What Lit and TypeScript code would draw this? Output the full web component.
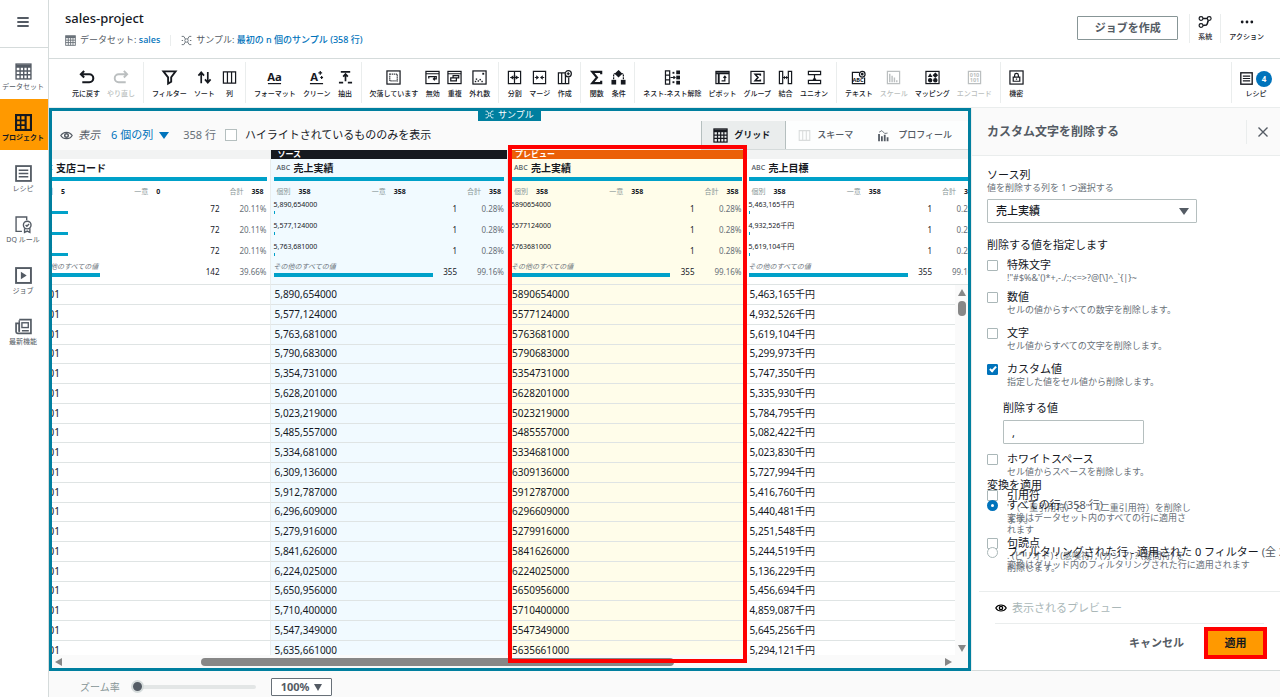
import { LitElement, html, css, svg, nothing, TemplateResult } from "lit";
import { customElement, property, state } from "lit/decorators.js";
import { classMap } from "lit/directives/class-map.js";
import { styleMap } from "lit/directives/style-map.js";

const dot = (x: number, y: number, s = 3) =>
  svg`<rect x=${x} y=${y} width=${s} height=${s} fill="currentColor" stroke="none"/>`;

/* Glyphs are drawn on a 16 x 16 grid and take the text colour. */
const ICONS: Record<string, TemplateResult> = {
  menu: svg`<path d="M1.500 3.500h13M1.500 8h13M1.500 12.500h13" stroke-width="2.200"/>`,
  table: svg`<rect x="1" y="1" width="14" height="14"/><path d="M1 3h14" stroke-width="3"/><path d="M1 7.500h14M1 11h14M4.800 3v12M8.200 3v12M11.600 3v12"/>`,
  project: svg`<rect x="1" y="1" width="14" height="14" stroke-width="2"/><path d="M1 6h9M1 10.500h9M5.300 1v14" stroke-width="1.500"/><path d="M10 1v14" stroke-width="2"/>`,
  list: svg`<rect x="1" y="1" width="14" height="14" stroke-width="1.700"/><path d="M3.500 5h9M3.500 8h9M3.500 11h9" stroke-width="1.500"/>`,
  dq: svg`<path d="M6.500 14.500H1V1h10v3"/><circle cx="11.500" cy="8.500" r="3.600"/><path d="M10 8.500l1.200 1.200 2-2.200M9 11.500v4l2.500-1.300L14 15.500v-4"/>`,
  play: svg`<rect x="1" y="1" width="14" height="14" stroke-width="1.800"/><path d="M5.500 4.500v7l5.500-3.500z" fill="currentColor" stroke="none"/>`,
  news: svg`<path d="M4 1.500h11v13H2.500a1.500 1.500 0 0 1-1.500-1.500V5h3v8" stroke-width="1.600"/><path d="M4 2v11M6.500 12h6.500"/><rect x="6.500" y="4.500" width="6" height="4.500"/>`,
  undo: svg`<path d="M5.500 1L2 4.500 5.500 8M2 4.500H11a4 4 0 0 1 0 8.500H3.500" stroke-width="2.200"/>`,
  redo: svg`<path d="M10.500 1L14 4.500 10.500 8M14 4.500H5a4 4 0 0 0 0 8.500h7.500" stroke-width="2"/>`,
  filter: svg`<path d="M1.500 1.500h13l-4.700 6.300v4.700L6.500 14.500V7.800z" stroke-width="2"/>`,
  sort: svg`<path d="M4.500 14V3.500M1.500 6l3-3.500 3 3.500M11.500 2v10.500M8.500 10l3 3.500 3-3.500" stroke-width="1.800"/>`,
  columns: svg`<path d="M1.500 2h13v12h-13zM5.800 2v12M10.200 2v12"/>`,
  format: svg`<text x="8" y="11.500" text-anchor="middle" class="aa">Aa</text><path d="M1 14.500h14"/>`,
  clean: svg`<text x="5.500" y="11.500" text-anchor="middle" class="aa">A</text><path d="M1 14.500h14M12 1v4M10 3h4M13.500 6.500v3M12 8h3"/>`,
  extract: svg`<path d="M3 2h10M8 12V4.500M5.500 7L8 4.300 10.500 7M1 13.500h4.500M10.500 13.500H15" stroke-width="1.800"/>`,
  missing: svg`<rect x="1" y="1" width="14" height="14"/><rect x="4" y="4.500" width="8" height="7" stroke-dasharray="1.200 .9"/>`,
  invalid: svg`<rect x="1" y="1.500" width="14" height="13"/><path d="M1 4h14M4 9V7h8v2.500H9.500M10.500 8l-1.500 1.500L10.500 11"/>`,
  duplicate: svg`<rect x="1" y="1.500" width="14" height="13"/><path d="M1 4h14M6.500 6h6v2.500h-6zM4 8.500h6v3H4z"/>`,
  outlier: svg`<rect x="1" y="1" width="14" height="14"/>${dot(11, 3, 2)}${dot(4, 9, 1.5)}${dot(6, 11, 1.5)}${dot(8, 9.5, 1.5)}${dot(10, 11.5, 1.5)}${dot(3, 11.5, 1.5)}`,
  split: svg`<path d="M1.500 1.500h13v13h-13zM8 1.500v13M3.500 8h9"/><path d="M6.800 5.500v5L3.500 8zM9.200 5.500v5L12.500 8z" fill="currentColor" stroke="none"/>`,
  merge: svg`<path d="M1.500 1.500h13v13h-13z"/><path d="M3 8h2M11 8h2"/><path d="M4.500 5.500v5L7.500 8zM11.500 5.500v5L8.500 8z" fill="currentColor" stroke="none"/>`,
  create: svg`<path d="M9 3H1.500v11.500h11V8M5 3v11.500M9 5v9.500"/><circle cx="12" cy="4" r="3.300"/><path d="M12 2.300v3.400M10.300 4h3.400"/>`,
  sigma: svg`<path d="M13 4.500V2H3.500l5 6-5 6H13v-2.500" stroke-width="2.300"/>`,
  cond: svg`<path d="M8 .8L11.200 4 8 7.200 4.800 4z" fill="currentColor"/><path d="M5 4H2.800v6M11 4h2.200v6" stroke-dasharray="2 1"/>${dot(.5, 10.500, 5)}${dot(10.500, 10.500, 5)}`,
  nest: svg`<path d="M.5 1h4.500v14H.5zM.5 5.500h4.500M.5 10.500h4.500M6 8h5M9 6.500L10.700 8 9 9.500"/>${dot(12, .5, 4)}${dot(12, 6, 4)}${dot(12, 11.500, 4)}${dot(8, 2, 2)}${dot(8, 12, 2)}`,
  pivot: svg`<rect x="1" y="1.500" width="14" height="13" stroke-width="1.300"/><path d="M1 3.500h14M4 3v11" stroke-width="2"/><path d="M7 11.500h3.500V7M9 8.300L10.500 6.500 12 8.300"/>`,
  group: svg`<rect x="1" y="1.500" width="14" height="13"/><path d="M11 6V4.500H5.500L8.500 8l-3 3.500H11V10" stroke-width="1.700"/>`,
  join: svg`<path d="M1.500 1.500h3.500v13H1.500zM11 1.500h3.500v13H11zM5 8h6"/><path d="M7.500 6v4L5.500 8zM8.500 6v4l2-2z" fill="currentColor" stroke="none"/>`,
  union: svg`<path d="M1.500 1.500h13V5h-13zM1.500 11h13v3.500h-13zM8 5v6M6.500 9.300L8 10.800l1.500-1.500"/>`,
  textic: svg`<path d="M9 2.500H1.500v12h13V8"/><circle cx="12" cy="4.500" r="3"/><circle cx="12" cy="4.500" r=".8"/><text x="7.500" y="12.500" text-anchor="middle" class="abc">ABC</text>`,
  scale: svg`<path d="M1.500 1.500h13v13h-13z"/><path d="M4 4v9M6.500 6v7M9 8v5M11.500 11v2" stroke-width="1.500"/>`,
  mapping: svg`<rect x="1" y="1.500" width="14" height="13"/><path d="M5.500 3.500L8 7.500H3z" fill="currentColor" stroke="none"/><circle cx="5.500" cy="11" r="1.700" fill="currentColor"/><circle cx="11" cy="11" r="1.700" fill="currentColor"/><path d="M11 3.500l2 2-2 2-2-2z" fill="currentColor"/>`,
  encode: svg`<path d="M1.500 1.500h13v13h-13z"/><text x="8" y="7.500" text-anchor="middle" class="abc">010</text><text x="8" y="13" text-anchor="middle" class="abc">101</text>`,
  lock: svg`<rect x="1" y="1" width="14" height="14"/><path d="M4.500 7.500h7v4.500h-7zM6 7.500V5.500a2 2 0 0 1 4 0v2M8 9v1.500"/>`,
  lineage: svg`<circle cx="3.500" cy="4" r="2.200"/><circle cx="12.800" cy="4" r="2.200"/><circle cx="3.500" cy="12" r="2.200"/><path d="M5.500 4h5M12 6.200c-1.500 1.500-.5 4-2.500 5.300L5.700 12" stroke-width="1.800"/>`,
  more: svg`<circle cx="2.500" cy="8" r="1.600" fill="currentColor" stroke="none"/><circle cx="8" cy="8" r="1.600" fill="currentColor" stroke="none"/><circle cx="13.500" cy="8" r="1.600" fill="currentColor" stroke="none"/>`,
  sample: svg`<circle cx="8" cy="8" r="2.500"/><path d="M1 2h3l2.500 4M15 2h-3L9.500 6M1 14h3l2.500-4M15 14h-3l-2.500-4M1 8h2M13 8h2" stroke-width="1.400"/>`,
  eye: svg`<path d="M1 8c3-5.300 11-5.300 14 0-3 5.300-11 5.300-14 0z" stroke-width="1.500"/><circle cx="8" cy="8" r="2.200" stroke-width="1.800"/>`,
  close: svg`<path d="M2 2l12 12M14 2L2 14" stroke-width="1.800"/>`,
  profile: svg`<path d="M2.500 6v9M6 9v6M9.500 7v8M13 10v5" stroke-width="2.200"/><path d="M2.500 4L6 2l3.500 3.500L13 5" stroke-width="1"/>`,
};

@customElement("ui-icon")
class UiIcon extends LitElement {
  @property() name = "";
  static styles = css`
    :host { display: block; width: 15px; height: 15px; flex: none; }
    svg { display: block; width: 100%; height: 100%; fill: none; stroke: currentColor; stroke-width: 1.3; overflow: visible; }
    text { fill: currentColor; stroke: none; font-family: "Noto Sans", sans-serif; font-weight: 700; }
    .aa { font-size: 12px; }
    .abc { font-size: 6px; }
  `;
  render() {
    return html`<svg viewBox="0 0 16 16" aria-hidden="true">${ICONS[this.name] ?? nothing}</svg>`;
  }
}

type Tool = { icon: string; label: string; off?: boolean };
const t = (icon: string, label: string, off = false): Tool => ({ icon, label, off });
const TOOLS: Tool[][] = [
  [t("undo", "元に戻す"), t("redo", "やり直し", true)],
  [t("filter", "フィルター"), t("sort", "ソート"), t("columns", "列")],
  [t("format", "フォーマット"), t("clean", "クリーン"), t("extract", "抽出")],
  [t("missing", "欠落しています"), t("invalid", "無効"), t("duplicate", "重複"), t("outlier", "外れ数")],
  [t("split", "分割"), t("merge", "マージ"), t("create", "作成")],
  [t("sigma", "関数"), t("cond", "条件")],
  [t("nest", "ネスト-ネスト解除"), t("pivot", "ピボット"), t("group", "グループ"), t("join", "結合"), t("union", "ユニオン")],
  [t("textic", "テキスト"), t("scale", "スケール", true), t("mapping", "マッピング"), t("encode", "エンコード", true)],
  [t("lock", "機密")],
];

const NAV = [
  ["table", "データセット"],
  ["project", "プロジェクト"],
  ["list", "レシピ"],
  ["dq", "DQ ルール"],
  ["play", "ジョブ"],
  ["news", "最新機能"],
];

type Column = { kind: string; band: string; name: string; distinct: string; unique: string; rows: [string, string, number][] };
const OTHER = "その他のすべての値";
const single = (a: string, b: string, c: string): [string, string, number][] => [
  [a, "1", 0.28], [b, "1", 0.28], [c, "1", 0.28], [OTHER, "355", 99.16],
];
const COLUMNS: Column[] = [
  { kind: "plain", band: "", name: "支店コード", distinct: "5", unique: "0", rows: [["0001", "72", 20.11], ["0002", "72", 20.11], ["0003", "72", 20.11], [OTHER, "142", 39.66]] },
  { kind: "source", band: "ソース", name: "売上実績", distinct: "358", unique: "358", rows: single("5,890,654000", "5,577,124000", "5,763,681000") },
  { kind: "preview", band: "プレビュー", name: "売上実績", distinct: "358", unique: "358", rows: single("5890654000", "5577124000", "5763681000") },
  { kind: "plain", band: "", name: "売上目標", distinct: "358", unique: "358", rows: single("5,463,165千円", "4,932,526千円", "5,619,104千円") },
];

const DATA: [string, string][] = [
  ["5,890,654000", "5,463,165"], ["5,577,124000", "4,932,526"], ["5,763,681000", "5,619,104"],
  ["5,790,683000", "5,299,973"], ["5,354,731000", "5,747,350"], ["5,628,201000", "5,335,930"],
  ["5,023,219000", "5,784,795"], ["5,485,557000", "5,082,422"], ["5,334,681000", "5,023,830"],
  ["6,309,136000", "5,727,994"], ["5,912,787000", "5,416,760"], ["6,296,609000", "5,440,481"],
  ["5,279,916000", "5,251,548"], ["5,841,626000", "5,244,519"], ["6,224,025000", "5,136,229"],
  ["5,650,956000", "5,456,694"], ["5,710,400000", "4,859,087"], ["5,547,349000", "5,645,256"],
  ["5,635,661000", "5,294,121"],
];

@customElement("data-grid")
class DataGrid extends LitElement {
  static styles = css`
    :host { display: flex; flex-direction: column; flex: 1; min-height: 0; position: relative; }
    .view { flex: 1; min-height: 0; overflow: hidden; position: relative; background: #fff; }
    table { width: 950px; margin-left: -20px; border-collapse: separate; border-spacing: 0; table-layout: fixed; }
    th, td { padding: 0; text-align: left; font-weight: 400; box-sizing: border-box; border-left: 1px solid #e9eded; border-bottom: 1px solid #dfe4e4; }
    .source { background: #f1faff; }
    .preview { background: #fffdea; }
    .band { height: 9px; line-height: 7px; font-size: 8px; font-weight: 700; color: #fff; background: #f2f3f3; padding-left: 7px; overflow: hidden; }
    .source .band { background: #16191f; }
    .preview .band { background: #eb5f07; }
    .name { display: flex; align-items: center; gap: 5px; height: 18px; padding-left: 6px; font-size: 10px; font-weight: 700; line-height: 16px; padding-bottom: 1px; box-sizing: border-box; color: #16191f; }
    .type { flex: none; width: 12px; font: 500 7px "Liberation Sans Narrow", "Noto Sans", sans-serif; color: #545b64; }
    .quality { height: 4px; margin: 0 3px; background: #00a1c9; }
    .stats { display: flex; justify-content: space-between; height: 18px; padding: 0 6px; box-sizing: border-box; line-height: 21px; font-size: 7px; color: #879596; }
    .stats b { color: #16191f; margin-left: 8px; }
    .row { display: grid; grid-template-columns: minmax(0, 1fr) 23px 47px; height: 21px; padding: 0 3px; }
    .label { height: 12px; line-height: 12px; font-size: 7px; color: #16191f; }
    .bar { height: 3px; background: #00a1c9; }
    .row.last { height: 20px; }
    .row.last .label { font-style: italic; color: #687078; height: 11px; line-height: 10px; }
    .row.last .bar { height: 4px; }
    .num { text-align: right; line-height: 20px; font-size: 8px; color: #16191f; }
    .pct { color: #687078; }
    .profile { padding-bottom: 2px; }
    tbody tr { height: 20px; }
    tbody tr:nth-child(4n) { height: 19px; }
    td { padding: 0 0 2px 4px; line-height: 16px; font-size: 10px; color: #16191f; white-space: nowrap; }
    .vscroll { position: absolute; right: 0; top: 135px; bottom: 0; width: 13px; background: #fafafa; display: flex; flex-direction: column; align-items: center; }
    .hscroll { display: flex; align-items: center; height: 13px; padding: 0 16px 0 3px; background: #fafafa; }
    .arrow { flex: none; width: 0; height: 0; border: 4px solid transparent; }
    .up { border-bottom: 7px solid #878787; border-top: 0; margin-top: 4px; }
    .down { border-top: 7px solid #878787; border-bottom: 0; margin: auto 0 3px; }
    .left { border-right: 7px solid #878787; border-left: 0; }
    .right { border-left: 7px solid #878787; border-right: 0; }
    .vthumb { width: 8px; height: 15px; margin-top: 5px; border-radius: 4px; background: #878787; }
    .track { flex: 1; padding: 0 30% 0 15%; }
    .hthumb { height: 8px; margin: 0 2px 0 4px; border-radius: 4px; background: #878787; }
    .mark { position: absolute; left: 456px; width: 239px; top: -5px; bottom: 5px; border: 4px solid #f00; box-sizing: border-box; pointer-events: none; }
  `;
  head(c: Column) {
    return html`<th class=${c.kind} scope="col">
      <div class="band">${c.band}</div>
      <div class="name"><span class="type">ABC</span>${c.name}</div>
      <div class="quality"></div>
      <div class="stats"><span>個別<b>${c.distinct}</b></span><span>一意<b>${c.unique}</b></span><span>合計<b>358</b></span></div>
      <div class="profile">${c.rows.map(([label, n, p], i) => html`<div class=${classMap({ row: true, last: i === 3 })}>
        <div><div class="label">${label}</div><div class="bar" style=${styleMap({ width: p + "%" })}></div></div>
        <div class="num">${n}</div><div class="num pct">${p}%</div></div>`)}</div>
    </th>`;
  }
  render() {
    return html`
      <div class="view">
        <table>
          <thead><tr>${COLUMNS.map((c) => this.head(c))}</tr></thead>
          <tbody>${DATA.map(([a, b]) => html`<tr>
            <td>0001</td><td class="source">${a}</td><td class="preview">${a.replace(/,/g, "")}</td><td>${b}千円</td></tr>`)}</tbody>
        </table>
        <div class="vscroll"><i class="arrow up"></i><i class="vthumb"></i><i class="arrow down"></i></div>
      </div>
      <div class="hscroll"><i class="arrow left"></i><div class="track"><div class="hthumb"></div></div><i class="arrow right"></i></div>
      <div class="mark"></div>`;
  }
}

type Option = { id: string; label: string; desc: string; tight?: boolean };
const OPTIONS: Option[] = [
  { id: "special", label: "特殊文字", desc: "!\"#$%&'()*+,-./:;<=>?@[\\]^_`{|}~", tight: true },
  { id: "number", label: "数値", desc: "セルの値からすべての数字を削除します。" },
  { id: "letter", label: "文字", desc: "セル値からすべての文字を削除します。" },
  { id: "custom", label: "カスタム値", desc: "指定した値をセル値から削除します。" },
  { id: "space", label: "ホワイトスペース", desc: "セル値からスペースを削除します。" },
  { id: "quote", label: "引用符", desc: "' （一重引用符）と \" （二重引用符）を削除します。" },
  { id: "punct", label: "句読点", desc: ". (ピリオド) ! (感嘆符) , (カンマ) ? (疑問符) を削除します。" },
];

@customElement("recipe-panel")
class RecipePanel extends LitElement {
  @state() checked: Record<string, boolean> = { custom: true };
  static styles = css`
    :host { display: flex; flex-direction: column; flex: none; width: 309px; box-sizing: border-box; background: #fff; border-bottom: 1px solid #d5dbdb; border-left: 1px solid #eaeded; font-size: 11px; line-height: 14px; color: #16191f; overflow: hidden; }
    button, input, select { font: inherit; color: inherit; }
    .head { flex: none; display: flex; justify-content: space-between; align-items: center; height: 47px; padding: 0 11px 0 15px; background: #fafafa; border-bottom: 1px solid #eaeded; }
    h2 { margin: 0; font-size: 12px; color: #545b64; }
    .close { display: flex; padding: 6px 0 6px 10px; border: 0; border-left: 1px solid #eaeded; background: none; color: #545b64; }
    .close ui-icon { width: 12px; height: 12px; }
    .body { flex: 1; min-height: 0; padding: 12px 0 0 15px; }
    label, .title { display: block; }
    .hint { font-size: 9px; line-height: 12px; color: #687078; }
    .select { position: relative; width: 210px; margin: 5px 0 15px; }
    select { appearance: none; display: block; width: 100%; height: 24px; padding: 0 8px; border: 1px solid #b5bfbf; border-radius: 1px; background: #fff; font-weight: 500; }
    .select::after { content: ""; position: absolute; right: 8px; top: 9px; border: 5px solid transparent; border-top: 7px solid #545b64; border-bottom: 0; pointer-events: none; }
    .opt { display: grid; grid-template-columns: 11px 1fr; column-gap: 9px; margin-top: 6px; margin-bottom: 10px; }
    .opt + .opt, .custom + .opt { margin-top: 0; }
    .opt.tight { margin-bottom: 6px; }
    .opt .hint { grid-column: 2; max-width: 186px; }
    .opt .hint.wide { max-width: none; white-space: nowrap; }
    .apply .opt .hint:not(.wide) { max-width: 184px; }
    .opt label { white-space: nowrap; }
    .opt em { font-style: normal; color: #545b64; }
    input[type="checkbox"], input[type="radio"] { appearance: none; width: 11px; height: 11px; margin: 2px 0 0; box-sizing: border-box; border: 1px solid #aab7b8; border-radius: 1px; background: #fff; }
    input[type="checkbox"]:checked { border-color: #0073bb; background: #0073bb; position: relative; }
    input[type="checkbox"]:checked::after { content: ""; position: absolute; left: 3px; top: 0; width: 2px; height: 5px; border: solid #fff; border-width: 0 2px 2px 0; transform: rotate(42deg); }
    input[type="radio"] { border-radius: 50%; }
    input[type="radio"]:checked { border: 4px solid #0073bb; }
    .custom { margin: 13px 0 8px 16px; }
    .custom input { display: block; box-sizing: border-box; width: 141px; height: 24px; margin-top: 5px; padding: 0 8px; border: 1px solid #b5bfbf; border-radius: 1px; background: #fff; }
    .apply { flex: none; padding: 0 0 20px 15px; height: 93px; }
    .apply .opt { margin-bottom: 9px; }
    .foot { flex: none; margin-left: 7px; border-top: 1px solid #eaeded; }
    .preview { display: flex; align-items: center; margin: 0 16px; height: 31px; border-bottom: 1px solid #eaeded; }
    .preview button { display: flex; align-items: center; gap: 5px; padding: 0; border: 0; background: none; color: #aab7b8; }
    .preview ui-icon { width: 12px; height: 12px; color: #000; }
    .actions { display: flex; justify-content: flex-end; align-items: center; gap: 24px; padding: 7px 17px 15px 0; }
    .actions button { padding: 0; height: 24px; border: 0; background: none; font-weight: 700; color: #545b64; }
    .actions .primary { width: 55px; background: #ff9900; color: #16191f; outline: 4px solid #f00; }
  `;
  toggle(id: string) {
    this.checked = { ...this.checked, [id]: !this.checked[id] };
  }
  render() {
    return html`
      <div class="head"><h2>カスタム文字を削除する</h2><button class="close" aria-label="閉じる"><ui-icon name="close"></ui-icon></button></div>
      <div class="body">
        <label for="src">ソース列</label>
        <div class="hint">値を削除する列を 1 つ選択する</div>
        <div class="select"><select id="src"><option>売上実績</option></select></div>
        <div class="title">削除する値を指定します</div>
        ${OPTIONS.map((o) => html`
          <div class=${classMap({ opt: true, tight: !!o.tight })}>
            <input type="checkbox" id=${o.id} .checked=${!!this.checked[o.id]} @change=${() => this.toggle(o.id)}>
            <label for=${o.id}>${o.label}</label>
            <div class="hint">${o.desc}</div>
          </div>
          ${o.id === "custom" && this.checked.custom
            ? html`<div class="custom"><label for="val">削除する値</label><input id="val" type="text" .value=${","}></div>`
            : nothing}`)}
      </div>
      <div class="apply" role="radiogroup" aria-labelledby="apply-title">
        <div class="title" id="apply-title">変換を適用</div>
        <div class="opt"><input type="radio" name="scope" id="all" checked><label for="all">すべての行 <em>(358 行)</em></label>
          <div class="hint">変換はデータセット内のすべての行に適用されます</div></div>
        <div class="opt"><input type="radio" name="scope" id="some"><label for="some">フィルタリングされた行 - 適用された 0 フィルター <em>(全 358 行)</em></label>
          <div class="hint wide">変換はグリッド内のフィルタリングされた行に適用されます</div></div>
      </div>
      <div class="foot">
        <div class="preview"><button><ui-icon name="eye"></ui-icon>表示されるプレビュー</button></div>
        <div class="actions"><button>キャンセル</button><button class="primary">適用</button></div>
      </div>`;
  }
}

@customElement("app-root")
class AppRoot extends LitElement {
  static styles = css`
    :host { display: flex; height: 100vh; overflow: hidden; background: #fafafa; color: #16191f; font-family: "Noto Sans", "Noto Sans CJK JP", sans-serif; font-size: 11px; line-height: 14px; }
    button, input, select { font: inherit; color: inherit; }
    button { padding: 0; border: 0; background: none; white-space: nowrap; }
    a { color: #0073bb; text-decoration: none; }
    nav { flex: none; width: 49px; box-sizing: border-box; border-right: 1px solid #d5dbdb; background: #fff; }
    .menu { display: grid; place-items: center; width: 100%; height: 48px; padding: 0 3px 3px 0; box-sizing: border-box; border-bottom: 1px solid #d5dbdb; color: #545b64; }
    .menu ui-icon { width: 14px; height: 14px; }
    .nav { display: flex; flex-direction: column; align-items: center; gap: 1px; height: 51px; padding: 15px 2px 0 0; box-sizing: border-box; font-size: 7px; line-height: 12px; color: #545b64; white-space: nowrap; }
    .nav ui-icon { width: 17px; height: 17px; }
    .nav.on { background: #ff9900; color: #16191f; font-weight: 700; }
    main { flex: 1; min-width: 0; display: flex; flex-direction: column; }
    header { flex: none; display: flex; align-items: center; height: 59px; box-sizing: border-box; border-bottom: 1px solid #d5dbdb; padding: 0 8px 2px 16px; background: #fff; }
    .titles { flex: 1; }
    h1 { margin: 0 0 6px; font-size: 13px; line-height: 18px; font-weight: 500; }
    .meta { display: flex; align-items: center; gap: 4px; font-size: 9px; line-height: 14px; color: #545b64; }
    .meta ui-icon { width: 11px; height: 11px; color: #687078; }
    .meta a { font-weight: 500; }
    .meta .bar { width: 1px; height: 11px; margin: 0 6px; background: #eaeded; }
    .job { height: 24px; width: 101px; border: 1px solid #879596; border-radius: 1px; font-weight: 700; color: #545b64; }
    .acts { display: flex; margin-left: 11px; }
    .acts button { display: flex; flex-direction: column; align-items: center; padding: 0 8px; border-left: 1px solid #eaeded; font-size: 7px; line-height: 13px; font-weight: 500; color: #16191f; }
    .acts ui-icon { width: 14px; height: 16px; }
    .toolbar { flex: none; display: flex; height: 49px; padding: 3px 0 4px 15px; box-sizing: border-box; background: #fff; border-bottom: 1px solid #eaeded; }
    .group { display: flex; gap: 7px; padding: 0 8px; border-right: 1px solid #eaeded; }
    .group:nth-last-child(2) { border-right: 0; }
    .tool { display: flex; flex-direction: column; align-items: center; gap: 3px; padding-top: 8px; min-width: 15px; font-size: 7px; line-height: 12px; font-weight: 500; }
    .tool:disabled { color: #bbbfc0; }
    .toolbar .end { margin-left: auto; padding: 0 8px; border-right: 0; border-left: 1px solid #eaeded; }
    .pair { display: flex; align-items: center; gap: 3px; height: 17px; }
    .count { width: 16px; height: 16px; border-radius: 8px; background: #0073bb; color: #fff; font-size: 8px; line-height: 16px; font-weight: 700; text-align: center; }
    .end .tool { gap: 1px; }
    .end ui-icon { width: 13px; height: 13px; }
    .split { flex: 1; min-height: 0; display: flex; }
    .work { flex: 1; min-width: 0; display: flex; flex-direction: column; position: relative; border: 3px solid #007f9f; background: #fafafa; }
    .flag { position: absolute; top: -3px; left: 426px; display: flex; align-items: center; gap: 4px; height: 13px; padding: 0 7px; background: #007f9f; color: #fff; font-size: 9px; line-height: 12px; }
    .flag ui-icon { width: 9px; height: 9px; }
    .bar2 { flex: none; display: flex; align-items: center; height: 39px; padding-left: 8px; box-sizing: border-box; color: #16191f; }
    .bar2 > * { margin-top: 9px; }
    .show { display: flex; gap: 5px; align-items: center; font-style: italic; color: #545b64; }
    .show ui-icon { width: 13px; height: 13px; }
    .cols { display: flex; align-items: center; gap: 6px; margin-left: 11px; color: #0073bb; }
    .cols::after { content: ""; border: 5px solid transparent; border-top: 7px solid #0073bb; border-bottom: 0; }
    .rows { margin-left: 14px; color: #687078; }
    .hl { display: flex; align-items: center; gap: 8px; margin-left: 9px; }
    .hl input { appearance: none; width: 12px; height: 12px; margin: 0; border: 1px solid #b5bfbf; background: #fff; box-sizing: border-box; }
    .tabs { display: flex; align-self: flex-end; margin-left: auto; height: 29px; background: #fdfefe; border-bottom: 1px solid #d5dbdb; box-sizing: border-box; }
    .tabs button { display: flex; align-items: center; gap: 6px; padding: 0 16px 0 12px; font-size: 9px; font-weight: 500; color: #545b64; }
    .tabs .on { padding: 0 15px 0 11px; background: #eaeded; border: 1px solid #b5bfbf; border-width: 0 1px; font-weight: 700; color: #16191f; }
    .tabs .pale { color: #d9dcdc; width: 13px; height: 13px; }
    .tabs .prof { gap: 8px; padding-left: 8px; }
    .tabs .prof ui-icon { width: 13px; height: 13px; }
    .bottom { flex: none; display: flex; align-items: center; height: 26px; padding: 6px 0 0 31px; box-sizing: border-box; color: #879596; font-size: 10px; }
    .bottom input { appearance: none; width: 125px; height: 14px; margin: 0 15px 0 11px; background: none; }
    .bottom input::-webkit-slider-runnable-track { height: 4px; border-radius: 2px; background: #e3e6e6; }
    .bottom input::-webkit-slider-thumb { appearance: none; width: 13px; height: 13px; margin-top: -5px; border-radius: 50%; border: 2px solid #d5dbdb; background: #545b64; }
    .zoom { position: relative; }
    .zoom select { appearance: none; display: block; width: 61px; height: 18px; padding: 0 9px; border: 1px solid #687078; border-radius: 1px; background: #fff; color: #545b64; font-size: 11px; font-weight: 700; line-height: 16px; }
    .zoom::after { content: ""; position: absolute; right: 10px; top: 6px; border: 4px solid transparent; border-top: 7px solid #545b64; border-bottom: 0; pointer-events: none; }
  `;
  tool(x: Tool) {
    return html`<button class="tool" ?disabled=${x.off}><ui-icon name=${x.icon}></ui-icon>${x.label}</button>`;
  }
  render() {
    return html`
      <nav>
        <button class="menu" aria-label="メニュー"><ui-icon name="menu"></ui-icon></button>
        ${NAV.map(([i, l], n) => html`<a href="#" class=${classMap({ nav: true, on: n === 1 })}><ui-icon name=${i}></ui-icon>${l}</a>`)}
      </nav>
      <main>
        <header>
          <div class="titles">
            <h1>sales-project</h1>
            <div class="meta"><ui-icon name="table"></ui-icon><span>データセット: <a href="#">sales</a></span><span class="bar"></span>
              <ui-icon name="sample"></ui-icon><span>サンプル: <a href="#">最初の n 個のサンプル (358 行)</a></span></div>
          </div>
          <button class="job">ジョブを作成</button>
          <div class="acts">
            <button><ui-icon name="lineage"></ui-icon>系統</button>
            <button><ui-icon name="more"></ui-icon>アクション</button>
          </div>
        </header>
        <div class="toolbar">
          ${TOOLS.map((g) => html`<div class="group">${g.map((x) => this.tool(x))}</div>`)}
          <div class="group end"><button class="tool"><span class="pair"><ui-icon name="list"></ui-icon><span class="count">4</span></span>レシピ</button></div>
        </div>
        <div class="split">
          <section class="work">
            <div class="flag"><ui-icon name="sample"></ui-icon>サンプル</div>
            <div class="bar2">
              <button class="show"><ui-icon name="eye"></ui-icon>表示</button>
              <button class="cols">6 個の列</button>
              <span class="rows">358 行</span>
              <label class="hl"><input type="checkbox">ハイライトされているもののみを表示</label>
              <div class="tabs">
                <button class="on"><ui-icon name="table"></ui-icon>グリッド</button>
                <button><ui-icon class="pale" name="columns"></ui-icon>スキーマ</button>
                <button class="prof"><ui-icon name="profile"></ui-icon>プロフィール</button>
              </div>
            </div>
            <data-grid></data-grid>
          </section>
          <recipe-panel></recipe-panel>
        </div>
        <div class="bottom">
          <label for="zoom">ズーム率</label><input id="zoom" type="range" min="0" max="100" value="0">
          <div class="zoom"><select aria-label="ズーム"><option>100%</option></select></div>
        </div>
      </main>`;
  }
}
